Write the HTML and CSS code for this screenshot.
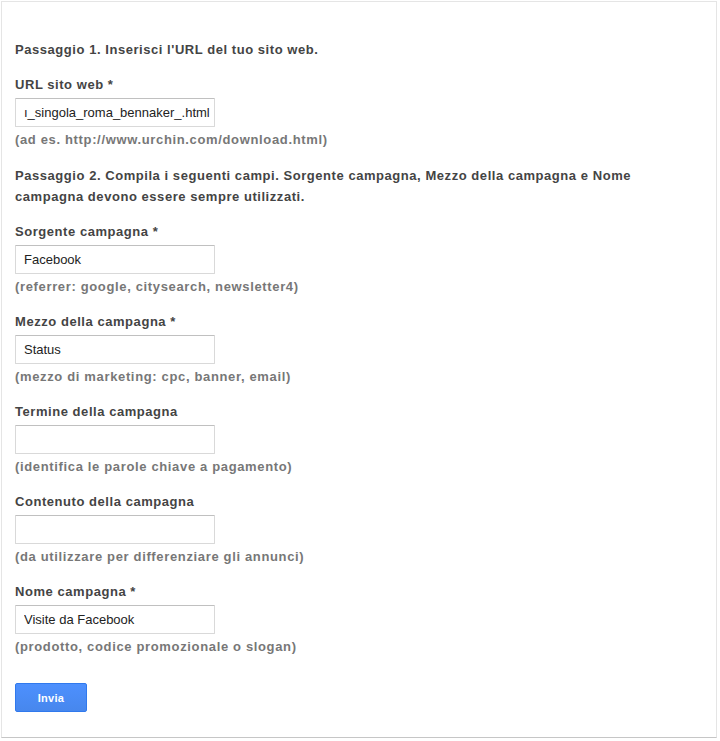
FILE: index.html
```html
<!DOCTYPE html>
<html lang="it">
<head>
  <meta charset="UTF-8">
  <meta name="viewport" content="width=device-width, initial-scale=1.0">
  <title>Strumento per la creazione di URL</title>
  <link rel="stylesheet" href="styles.css">
</head>
<body>
  <div class="panel">
    <form class="url-form" onsubmit="return false;">
      <p class="step">Passaggio 1. Inserisci l'URL del tuo sito web.</p>

      <div class="field">
        <label class="field-label" for="url">URL sito web *</label>
        <input class="field-input" id="url" type="text" value="ı_singola_roma_bennaker_.html">
        <p class="field-hint">(ad es. http://www.urchin.com/download.html)</p>
      </div>

      <p class="step">Passaggio 2. Compila i seguenti campi. Sorgente campagna, Mezzo della campagna e Nome campagna devono essere sempre utilizzati.</p>

      <div class="field">
        <label class="field-label" for="source">Sorgente campagna *</label>
        <input class="field-input" id="source" type="text" value="Facebook">
        <p class="field-hint">(referrer: google, citysearch, newsletter4)</p>
      </div>

      <div class="field">
        <label class="field-label" for="medium">Mezzo della campagna *</label>
        <input class="field-input" id="medium" type="text" value="Status">
        <p class="field-hint">(mezzo di marketing: cpc, banner, email)</p>
      </div>

      <div class="field">
        <label class="field-label" for="term">Termine della campagna</label>
        <input class="field-input" id="term" type="text" value="">
        <p class="field-hint">(identifica le parole chiave a pagamento)</p>
      </div>

      <div class="field">
        <label class="field-label" for="content">Contenuto della campagna</label>
        <input class="field-input" id="content" type="text" value="">
        <p class="field-hint">(da utilizzare per differenziare gli annunci)</p>
      </div>

      <div class="field">
        <label class="field-label" for="name">Nome campagna *</label>
        <input class="field-input" id="name" type="text" value="Visite da Facebook">
        <p class="field-hint">(prodotto, codice promozionale o slogan)</p>
      </div>

      <button class="btn-submit" type="submit">Invia</button>
    </form>
  </div>
</body>
</html>
```

FILE: styles.css
```css
body {
  margin: 0;
  padding: 0;
  background: #fff;
  font-family: 'Liberation Sans', Arial, sans-serif;
  font-size: 13px;
  color: #444;
}

.panel {
  box-sizing: border-box;
  width: 716px;
  height: 737px;
  margin: 1px 0 0 1px;
  border: 1px solid #e5e5e5;
  border-bottom: 1px solid #c6c6c6;
  box-shadow: 0 1px 0 #e2e2e2;
  padding: 37px 13px 0 13px;
}

.url-form {
  display: flex;
  flex-direction: column;
  align-items: flex-start;
}

.step {
  margin: 0 0 15px 0;
  font-weight: bold;
  line-height: 21px;
  letter-spacing: 0.55px;
  color: #444;
  max-width: 640px;
}

.field {
  display: flex;
  flex-direction: column;
  align-items: flex-start;
  margin-bottom: 15px;
}

.field-label {
  font-weight: bold;
  line-height: 20px;
  letter-spacing: 0.55px;
  margin-bottom: 3px;
  color: #444;
}

.field-input {
  box-sizing: border-box;
  width: 200px;
  height: 29px;
  margin: 0;
  padding: 0 3px 0 8px;
  border: 1px solid #d9d9d9;
  border-top-color: #c0c0c0;
  border-radius: 1px;
  font-family: 'Liberation Sans', Arial, sans-serif;
  font-size: 13px;
  color: #222;
  background: #fff;
  outline: none;
}

.field-hint {
  margin: 3px 0 0 0;
  font-weight: bold;
  line-height: 20px;
  letter-spacing: 0.65px;
  color: #777;
}

.btn-submit {
  margin-top: 11px;
  width: 72px;
  height: 29px;
  padding: 0;
  border: 1px solid #3079ed;
  border-radius: 2px;
  background: linear-gradient(#4d90fe, #4787ed);
  color: #fff;
  font-family: 'Liberation Sans', Arial, sans-serif;
  font-size: 11px;
  font-weight: bold;
  letter-spacing: 0.3px;
  cursor: pointer;
}

.btn-submit:hover {
  background: #357ae8;
}
```
